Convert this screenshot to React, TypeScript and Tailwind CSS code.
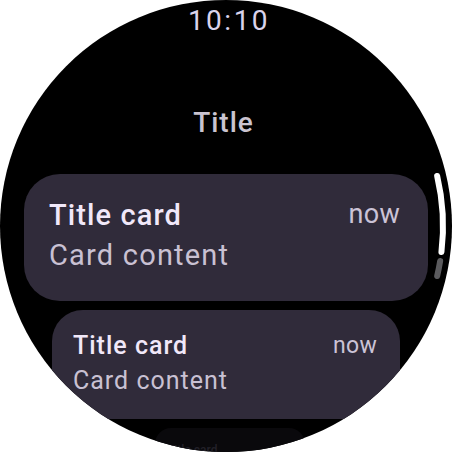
import React from "react";

type CardProps = {
  title: string;
  content: string;
  time: string;
};

function ScrollIndicator() {
  // arcs following the screen edge, centre (226,226) r 217
  const r = 217;
  const pt = (y: number) => {
    const dy = y - 226;
    const x = 226 + Math.sqrt(r * r - dy * dy);
    return `${x.toFixed(2)} ${y}`;
  };
  return (
    <svg
      className="absolute inset-0 pointer-events-none"
      width={452}
      height={452}
      viewBox="0 0 452 452"
    >
      <path
        d={`M ${pt(261)} A ${r} ${r} 0 0 1 ${pt(276)}`}
        stroke="#5b5b5e"
        strokeWidth={6}
        strokeLinecap="round"
        fill="none"
      />
      <path
        d={`M ${pt(176)} A ${r} ${r} 0 0 1 ${pt(252)}`}
        stroke="#ffffff"
        strokeWidth={6}
        strokeLinecap="round"
        fill="none"
      />
    </svg>
  );
}

function BigCard({ title, content, time }: CardProps) {
  return (
    <div className="w-[404px] h-[127px] rounded-[36px] bg-[#302b3a] pl-[25px] pr-[28px] pt-[27px] flex flex-col">
      <div className="flex items-start justify-between">
        <span className="text-[29px] leading-[28px] tracking-[1.1px] font-medium text-[#f1e8f9]">{title}</span>
        <span className="text-[27px] leading-[26px] tracking-[0.3px] text-[#cbc3d6]">{time}</span>
      </div>
      <span className="mt-[12px] text-[29px] leading-[28px] tracking-[1.2px] text-[#c9c1d3]">{content}</span>
    </div>
  );
}

function SmallCard({ title, content, time }: CardProps) {
  return (
    <div className="mt-[9px] w-[348px] h-[109px] shrink-0 rounded-[31px] bg-[#302b3a] pl-[21px] pr-[23px] pt-[24px] flex flex-col">
      <div className="flex items-start justify-between">
        <span className="text-[25px] leading-[24px] tracking-[1px] font-medium text-[#f1e8f9]">{title}</span>
        <span className="text-[23px] leading-[23px] tracking-[0.3px] text-[#cbc3d6]">{time}</span>
      </div>
      <span className="mt-[11px] text-[25px] leading-[24px] tracking-[1px] text-[#c9c1d3]">{content}</span>
    </div>
  );
}

export default function App() {
  return (
    <div className="w-[452px] h-[452px] bg-white" style={{ fontFamily: "Roboto, 'Noto Sans', sans-serif" }}>
      <div className="relative w-[452px] h-[452px] rounded-full bg-black overflow-hidden flex flex-col items-center">
        <div className="pt-[7px] pl-[6px] text-[28px] leading-[28px] tracking-[2.5px] text-[#dad3ec]">10:10</div>
        <div className="mt-[74px] pr-[5px] text-[28px] leading-[28px] tracking-[1px] font-medium text-[#cac4d0]">Title</div>

        <div className="mt-[37px]">
          <BigCard title="Title card" content="Card content" time="now" />
        </div>

        <SmallCard title="Title card" content="Card content" time="now" />

        <div className="mt-[9px] w-[150px] h-[60px] shrink-0 rounded-[16px] bg-[#0a090c] pl-[12px] pt-[9px] ml-[8px]">
          <span className="text-[12px] leading-[12px] font-medium text-[#222028]">Title card</span>
        </div>

        <ScrollIndicator />
      </div>
    </div>
  );
}
